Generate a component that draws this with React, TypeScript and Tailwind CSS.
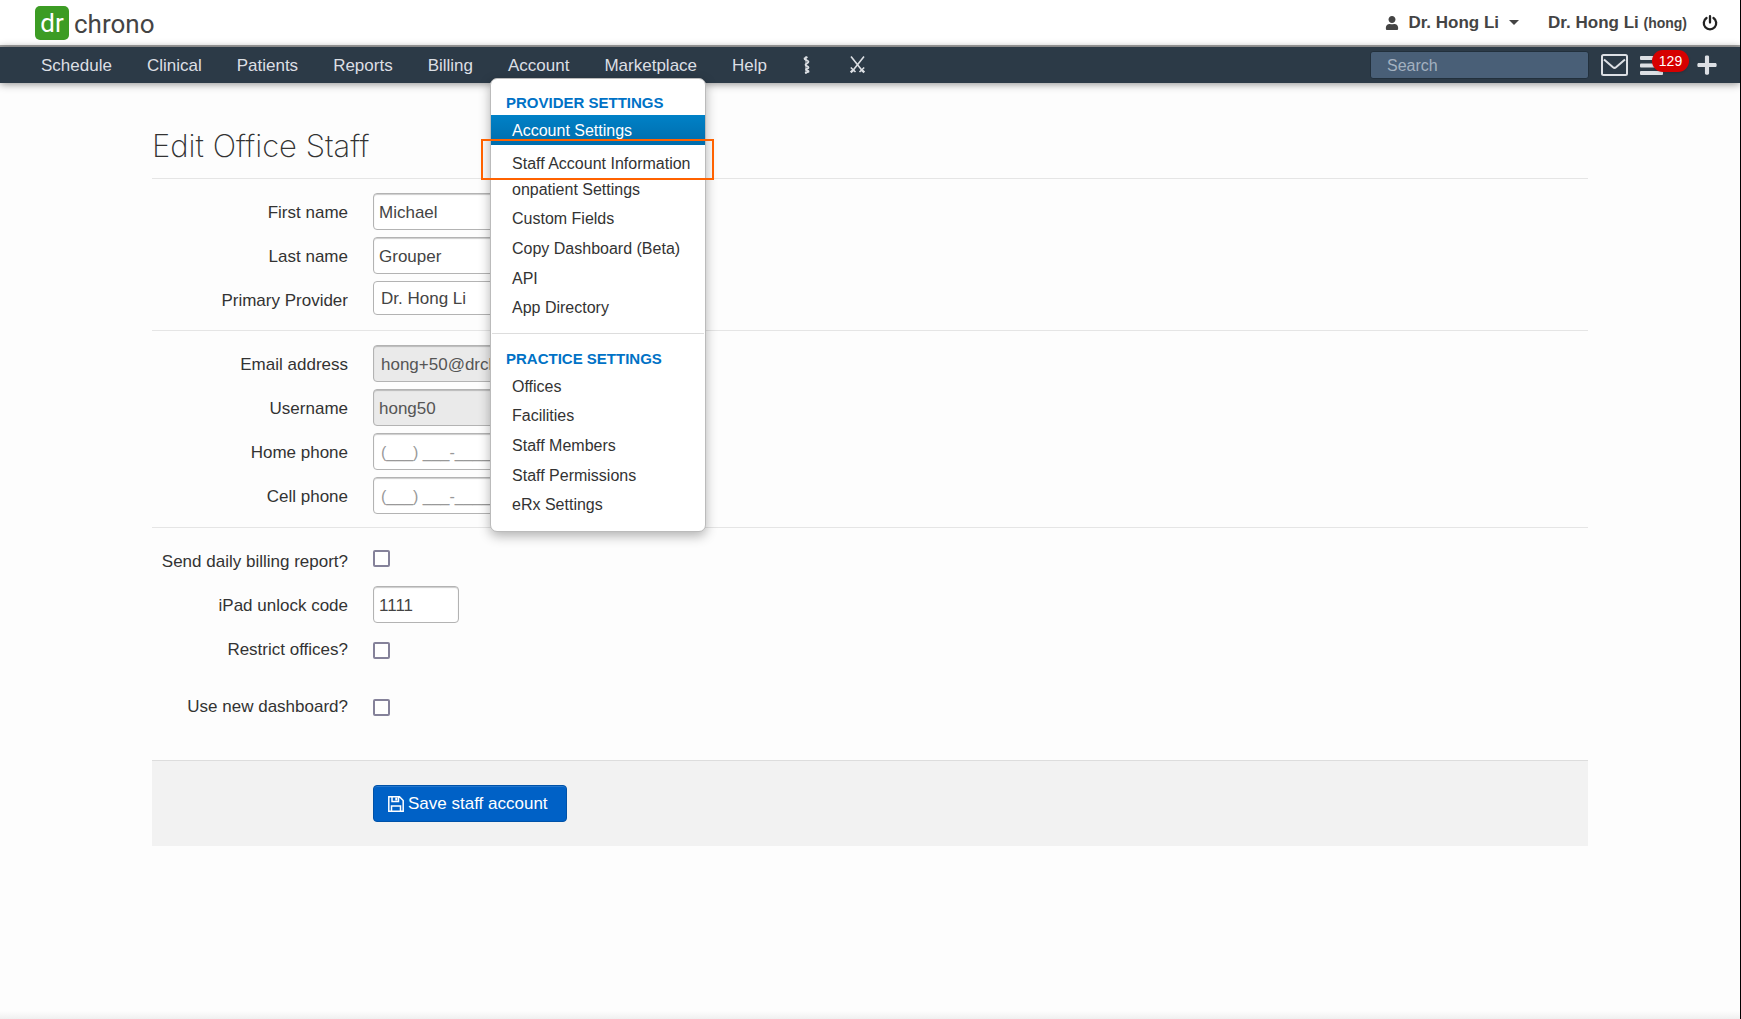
import React from 'react';
import { FaUser, FaPlus } from 'react-icons/fa';

const navItems = ['Schedule', 'Clinical', 'Patients', 'Reports', 'Billing', 'Account', 'Marketplace', 'Help'];

const providerLinks = ['onpatient Settings', 'Custom Fields', 'Copy Dashboard (Beta)', 'API', 'App Directory'];

const practiceLinks = ['Offices', 'Facilities', 'Staff Members', 'Staff Permissions', 'eRx Settings'];

const inputClass =
  'h-[37px] w-[280px] rounded-[4px] border border-[#b3b3b3] bg-white px-[5px] pt-[2px] text-[#444] shadow-[inset_0_1px_1px_rgba(0,0,0,0.2)]';

const disabledClass =
  'h-[37px] w-[280px] rounded-[4px] border border-[#b3b3b3] bg-[#eaeaea] pt-[2px] text-[#555] shadow-[inset_0_1px_1px_rgba(0,0,0,0.2)]';

const phoneClass =
  'h-[37px] w-[280px] rounded-[4px] border border-[#b3b3b3] bg-white px-[7px] pt-[2px] text-base shadow-[inset_0_1px_1px_rgba(0,0,0,0.2)] placeholder:text-[#999]';

const checkboxClass = 'size-[17px] appearance-none rounded-[2px] border-2 border-[#85829a] bg-white';

const CaduceusIcon = () => (
  <svg className="h-[18px] w-2" viewBox="0 0 8 18" fill="none" stroke="currentColor" strokeWidth="1.8" aria-hidden>
    <path d="M3 0v18" strokeWidth="1" />
    <path d="M4.5 1L1.5 2.500C1 4 5.500 4.200 5.500 5.800S2.500 7.500 2.500 8.800s3 1.200 3 2.600-2.500 1-2.500 2.200 3 .900 2.500 2.200L2 17" />
  </svg>
);

const SwordsIcon = () => (
  <svg className="h-[18px] w-[15px]" viewBox="0 0 15 18" fill="none" stroke="currentColor" strokeWidth="1.6" aria-hidden>
    <path d="M1 .500l11.500 14.500M14 .500L2.500 15" />
    <path d="M.800 11.500l4.700 4.500M14.200 11.500L9.500 16" />
    <path d="M.700 16.500l2.500-2.500M14.300 16.500l-2.500-2.500" strokeWidth="2.400" />
  </svg>
);

const EnvelopeIcon = () => (
  <svg className="h-[22px] w-[27px]" viewBox="0 0 27 22" fill="none" stroke="currentColor" strokeWidth="2" aria-hidden>
    <rect x="1" y="1" width="25" height="20" rx="1.500" />
    <path d="M3 5.500l9 7.800c1 .800 2 .800 3 0l9-7.800" />
  </svg>
);

const BarsIcon = () => (
  <svg className="h-[19px] w-[23px]" viewBox="0 0 23 19" fill="currentColor" aria-hidden>
    <rect width="23" height="4" rx="1" />
    <rect y="7.500" width="23" height="4" rx="1" />
    <rect y="15" width="23" height="4" rx="1" />
  </svg>
);

const PowerIcon = () => (
  <svg className="size-4" viewBox="0 0 16 16" fill="none" stroke="currentColor" strokeWidth="2.300" strokeLinecap="round" aria-hidden>
    <path d="M8 1.200v6.300M4.500 3a6.200 6.200 0 107 0" />
  </svg>
);

const SaveIcon = () => (
  <svg className="size-4" viewBox="0 0 16 16" fill="none" stroke="currentColor" strokeWidth="1.500" aria-hidden>
    <path d="M.800.800h10.700l3.700 3.700v10.700H.800zM4 1v4.500h6.500V1M3.500 15v-5h9v5" />
    <path d="M8.300 1.500v3" strokeWidth="2" />
  </svg>
);

interface RowProps {
  id: string;
  label: string;
  children: React.ReactNode;
}

const Row: React.FC<RowProps> = ({ id, label, children }) => (
  <div className="flex h-[37px] items-center gap-[25px]">
    <label htmlFor={id} className="w-[196px] pt-[2px] text-right">
      {label}
    </label>
    {children}
  </div>
);

const AccountMenu = () => (
  <div className="absolute top-[31px] -left-[18px] z-10 w-[216px] rounded-[7px] border border-[#bbb] bg-white pt-3 pb-[11px] text-base text-[#333] shadow-[0_4px_12px_rgba(0,0,0,0.3)]">
    <h2 className="px-[15px] text-[15px] leading-6 font-bold whitespace-nowrap text-[#0072c6]">PROVIDER SETTINGS</h2>
    <ul>
      <li className="h-[30px] bg-linear-to-b from-[#0081c7] to-[#006dac] px-[21px] leading-8 text-white">
        <a href="#account-settings">Account Settings</a>
      </li>
      <li className="relative h-[30px] px-[21px] pt-1 leading-[30px] whitespace-nowrap">
        <a href="#staff-account">Staff Account Information</a>
        <span className="pointer-events-none absolute -top-[6px] -right-[9px] -bottom-[5px] -left-[10px] border-2 border-[#ff6200]" />
      </li>
    </ul>
    <ul className="grid h-[148px] auto-rows-fr items-center px-[21px]">
      {providerLinks.map((link) => (
        <li key={link} className="whitespace-nowrap">
          <a href="#provider">{link}</a>
        </li>
      ))}
    </ul>
    <hr className="mx-px mt-[10px] mb-[12px] border-[#ddd]" />
    <h2 className="px-[15px] text-[15px] leading-[26px] font-bold whitespace-nowrap text-[#0072c6]">PRACTICE SETTINGS</h2>
    <ul className="grid h-[148px] auto-rows-fr items-center px-[21px]">
      {practiceLinks.map((link) => (
        <li key={link}>
          <a href="#practice">{link}</a>
        </li>
      ))}
    </ul>
  </div>
);

const App: React.FC = () => {
  return (
    <div className="flex min-h-screen flex-col border-r border-black bg-[#fdfdfd] font-['Liberation_Sans',Arial,sans-serif] text-[17px] text-[#333]">
      <header className="flex h-[47px] items-center justify-between border-b-2 border-[#a5a5a5] bg-white pr-[22px] pl-[35px]">
        <a href="#home" className="flex items-center gap-[5px] font-[Roboto,sans-serif] text-[26px] leading-[34px] text-[#444]">
          <span className="flex size-[34px] items-center justify-center rounded-[5px] bg-[#3c9c24] text-white">dr</span>
          <span className="pt-[2px]">chrono</span>
        </a>
        <div className="flex items-center font-bold text-[#444]">
          <button className="flex items-center">
            <FaUser className="mr-[9px] size-[14px]" />
            Dr. Hong Li
            <span className="ml-[10px] border-x-[5px] border-t-[5px] border-x-transparent border-t-[#444]" />
          </button>
          <span className="ml-[29px]">
            Dr. Hong Li <span className="text-[14px]">(hong)</span>
          </span>
          <button className="ml-[15px] text-[#222]" aria-label="Log out">
            <PowerIcon />
          </button>
        </div>
      </header>

      <nav className="flex h-9 items-center justify-between bg-[#2c3a47] pr-[22px] pl-[41px] text-[#dcdfe4] shadow-[0_1px_8px_rgba(0,0,0,0.45)]">
        <div className="flex items-center gap-[35px]">
          {navItems.map((item) => (
            <div key={item} className="relative h-9 leading-[38px]">
              <a href="#nav">{item}</a>
              {item === 'Account' && <AccountMenu />}
            </div>
          ))}
          <div className="flex items-center gap-[39px] pl-px">
            <CaduceusIcon />
            <SwordsIcon />
          </div>
        </div>
        <div className="flex items-center">
          <input
            type="search"
            aria-label="Search"
            placeholder="Search"
            className="mr-3 h-[28px] w-[219px] rounded-[3px] border border-[#22303c] bg-[#495f77] px-4 pt-px text-base placeholder:text-[#a3b1c0]"
          />
          <EnvelopeIcon />
          <button className="relative ml-3 flex w-[56px]" aria-label="Tasks">
            <BarsIcon />
            <span className="absolute -top-[6px] left-3 h-[22px] w-[37px] rounded-full bg-[#d60000] text-center text-[14px] leading-[23px] text-white shadow">
              129
            </span>
          </button>
          <FaPlus className="size-[22px]" />
        </div>
      </nav>

      <main className="px-38 pt-10">
        <h1 className="h-14 border-b border-[#e5e5e5] font-[Inter,sans-serif] text-[31px] leading-[46px] font-extralight text-[#333]">Edit Office Staff</h1>
        <form>
          <div className="flex flex-col gap-[7px] border-b border-[#e5e5e5] pt-[14px] pb-[12px]">
            <Row id="first" label="First name">
              <input id="first" className={inputClass} defaultValue="Michael" />
            </Row>
            <Row id="last" label="Last name">
              <input id="last" className={inputClass} defaultValue="Grouper" />
            </Row>
            <Row id="provider" label="Primary Provider">
              <select id="provider" className="h-[34px] w-[280px] appearance-none self-start rounded-[4px] border border-[#b3b3b3] bg-white px-[7px] pt-px text-[#444]">
                <option>Dr. Hong Li</option>
              </select>
            </Row>
          </div>
          <div className="flex flex-col gap-[7px] border-b border-[#e5e5e5] pt-[14px] pb-[13px]">
            <Row id="email" label="Email address">
              <input id="email" className={`${disabledClass} px-[7px]`} defaultValue="hong+50@drchrono.com" readOnly />
            </Row>
            <Row id="username" label="Username">
              <input id="username" className={`${disabledClass} px-[5px]`} defaultValue="hong50" readOnly />
            </Row>
            <Row id="home" label="Home phone">
              <input id="home" className={phoneClass} placeholder="(___) ___-____" />
            </Row>
            <Row id="cell" label="Cell phone">
              <input id="cell" className={phoneClass} placeholder="(___) ___-____" />
            </Row>
          </div>
          <div className="flex flex-col gap-[7px] pt-[14px] pb-[36px]">
            <Row id="report" label="Send daily billing report?">
              <input id="report" type="checkbox" className={`${checkboxClass} mb-1`} />
            </Row>
            <Row id="code" label="iPad unlock code">
              <input
                id="code"
                className="h-[37px] w-[86px] rounded-[4px] border border-[#b3b3b3] bg-white px-[5px] pt-[2px] text-[#444] shadow-[inset_0_1px_1px_rgba(0,0,0,0.2)]"
                defaultValue="1111"
              />
            </Row>
            <Row id="restrict" label="Restrict offices?">
              <input id="restrict" type="checkbox" className={`${checkboxClass} mt-1`} />
            </Row>
            <div className="pt-[13px]">
              <Row id="dashboard" label="Use new dashboard?">
                <input id="dashboard" type="checkbox" className={`${checkboxClass} mt-1`} />
              </Row>
            </div>
          </div>
          <div className="border-t border-[#ddd] bg-[#f2f2f2] pt-6 pb-6 pl-[221px]">
            <button
              type="button"
              className="flex h-[37px] items-center gap-1 rounded-[4px] border border-[#0052a8] bg-[#0061c6] pt-px pr-[18px] pl-[14px] text-white shadow-[inset_0_1px_0_rgba(255,255,255,0.15)]"
            >
              <SaveIcon />
              Save staff account
            </button>
          </div>
        </form>
      </main>
      <div className="mt-auto h-2 bg-linear-to-b from-[#fdfdfd] to-[#f0f0f0]" />
    </div>
  );
};

export default App;
